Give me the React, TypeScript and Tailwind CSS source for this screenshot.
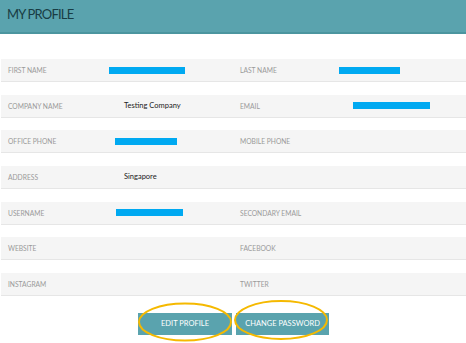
import React from "react";

const Bar = ({ w, ml }: { w: number; ml: number }) => (
  <div className="h-[7px] bg-[#00a9f1]" style={{ width: w, marginLeft: ml }} />
);

type Cell = { label: string; value?: React.ReactNode };

const rows: [Cell, Cell][] = [
  [
    { label: "FIRST NAME", value: <Bar w={76} ml={0} /> },
    { label: "LAST NAME", value: <Bar w={61} ml={0} /> },
  ],
  [
    { label: "COMPANY NAME", value: <span className="ml-[15px] text-[7.5px] text-[#222]">Testing Company</span> },
    { label: "EMAIL", value: <Bar w={77} ml={14} /> },
  ],
  [
    { label: "OFFICE PHONE", value: <Bar w={62} ml={6} /> },
    { label: "MOBILE PHONE" },
  ],
  [
    { label: "ADDRESS", value: <span className="ml-[15px] text-[7.5px] text-[#222]">Singapore</span> },
    { label: "" },
  ],
  [
    { label: "USERNAME", value: <Bar w={67} ml={7} /> },
    { label: "SECONDARY EMAIL" },
  ],
  [{ label: "WEBSITE" }, { label: "FACEBOOK" }],
  [{ label: "INSTAGRAM" }, { label: "TWITTER" }],
];

const CellView = ({ c, right }: { c: Cell; right?: boolean }) => (
  <div className={right ? "flex flex-1 items-center pl-[6px]" : "flex flex-1 items-center pl-[7px]"}>
    <div className={right ? "w-[99px] shrink-0 text-[6.7px] text-[#9a9a9a]" : "w-[101px] shrink-0 text-[6.7px] text-[#9a9a9a]"}>
      {c.label}
    </div>
    {c.value}
  </div>
);

export default function App() {
  return (
    <div className="w-[466px] h-[343px] bg-white overflow-hidden" style={{ fontFamily: "Lato, 'Open Sans', sans-serif" }}>
      <div className="h-[34px] bg-[#5aa3ae] border-b-2 border-[#4b959f] flex items-start pt-[8px] pl-[7px]">
        <span className="text-[13px] text-[#183c44] tracking-[-0.8px] leading-none">MY PROFILE</span>
      </div>
      <div className="mt-[25px] flex flex-col gap-[12.7px] pl-[1px]">
        {rows.map((r, i) => (
          <div key={i} className="flex h-[23px] bg-[#f5f5f5] border-b border-[#e6e6e6]">
            <CellView c={r[0]} />
            <CellView c={r[1]} right />
          </div>
        ))}
      </div>
      <div className="mt-[12px] flex justify-center gap-[4px] pl-[1px]">
        <div className="relative">
          <button className="w-[94px] h-[22px] bg-[#5aa3ae] text-white text-[7.5px]">EDIT PROFILE</button>
          <svg className="absolute pointer-events-none" style={{ left: 0, top: -6, width: 96, height: 40 }} viewBox="0 0 96 40">
            <ellipse cx="47" cy="20" rx="46" ry="18.5" fill="none" stroke="#f5b900" strokeWidth="2" />
          </svg>
        </div>
        <div className="relative">
          <button className="w-[93px] h-[22px] bg-[#5aa3ae] text-white text-[7.5px]">CHANGE PASSWORD</button>
          <svg className="absolute pointer-events-none" style={{ left: -2, top: -8, width: 96, height: 41 }} viewBox="0 0 96 41">
            <ellipse cx="47" cy="20" rx="46" ry="19" fill="none" stroke="#f5b900" strokeWidth="2" />
          </svg>
        </div>
      </div>
    </div>
  );
}
